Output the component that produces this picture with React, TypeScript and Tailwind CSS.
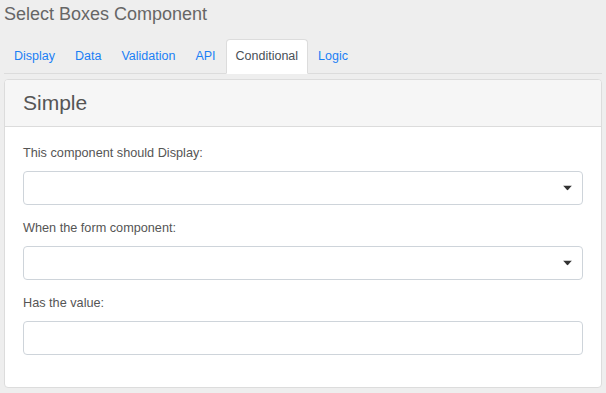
import React from "react";

const tabs = ["Display", "Data", "Validation", "API", "Conditional", "Logic"];

function Caret() {
  return (
    <svg width="9" height="5" viewBox="0 0 9 5" className="absolute right-[10px] top-1/2 -translate-y-1/2">
      <path d="M0 0 L9 0 L4.5 5 Z" fill="#333" />
    </svg>
  );
}

function Field({ label, select }: { label: string; select?: boolean }) {
  return (
    <div className="mb-[14px]">
      <div className="text-[12.7px] leading-[18px] text-[#555] mb-[9px]">{label}</div>
      <div className="relative h-[34px] rounded-[4px] border border-[#ced4da] bg-white">
        {select && <Caret />}
      </div>
    </div>
  );
}

export default function App() {
  return (
    <div
      className="min-h-[393px] bg-[#eeeeee] p-1"
      style={{ fontFamily: '"Liberation Sans", Arial, sans-serif' }}
    >
      <div className="text-[18px] leading-[21px] text-[#666] mb-[14px]">Select Boxes Component</div>
      <div className="flex border-b border-[#dcdcdc]">
        {tabs.map((t) => {
          const active = t === "Conditional";
          return (
            <div
              key={t}
              className={
                active
                  ? "-mb-px px-[9px] pt-[7px] pb-2 text-[12.5px] leading-[18px] text-[#495057] bg-white border border-[#dcdcdc] border-b-white rounded-t-[4px]"
                  : "-mb-px px-[9px] pt-[7px] pb-2 text-[12.5px] leading-[18px] text-[#1a7ff5] border border-transparent"
              }
            >
              {t}
            </div>
          );
        })}
      </div>
      <div className="mt-[5px] rounded-[4px] border border-[#dcdcdc] bg-white overflow-hidden">
        <div className="bg-[#f6f6f6] border-b border-[#dcdcdc] px-[18px] pt-[10px] pb-[11px] text-[21px] leading-[25px] text-[#555]">
          Simple
        </div>
        <div className="px-[18px] pt-[17px] pb-[18px]">
          <Field label="This component should Display:" select />
          <Field label="When the form component:" select />
          <Field label="Has the value:" />
        </div>
      </div>
    </div>
  );
}
